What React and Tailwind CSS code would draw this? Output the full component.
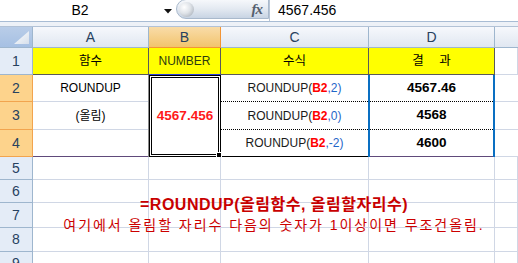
import React from "react";

const F = "font-['Liberation_Sans','Noto_Sans_CJK_KR',sans-serif]";

function RowHead({ n, h, sel }) {
  return (
    <div
      className={
        "w-[33px] shrink-0 flex items-center justify-center text-[14px] text-[#27415f] border-r border-b " +
        h +
        (sel ? " bg-[#fdd38c] border-[#f2a44e]" : " bg-[#e4ecf7] border-[#9eb6ce]")
      }
    >
      {n}
    </div>
  );
}

function Grid({ w }) {
  return <div className={"shrink-0 h-full border-r border-b border-[#d0d7e5] " + w} />;
}

function Formula({ arg }) {
  return (
    <span>
      <span className="text-[#1a1a1a]">ROUNDUP(</span>
      <span className="text-[#ff0000] font-bold">B2</span>
      <span className="text-[#1f66c8]">,{arg})</span>
    </span>
  );
}

export default function App() {
  return (
    <div className={"w-[518px] h-[263px] overflow-hidden bg-white relative " + F}>
      {/* formula bar */}
      <div className="flex h-[22px] border-b border-[#a8bcd4] bg-white">
        <div className="w-[160px] shrink-0 flex items-center justify-center text-[14px] text-black">B2</div>
        <div className="w-[16px] shrink-0 flex items-center">
          <svg width="8" height="5" viewBox="0 0 8 5" className="ml-[4px] mt-[2px]">
            <polygon points="0,0 8,0 4,4.5" fill="#111" />
          </svg>
        </div>
        <div className="w-[93px] shrink-0 h-[20px] -mt-[1px] rounded-l-[10px] border border-[#a9b9cc] bg-gradient-to-b from-[#f6f8fb] via-[#e3e9f1] to-[#c8d4e3] flex items-center justify-between pl-[2px] pr-[6px]">
          <div className="w-[15px] h-[15px] rounded-full bg-[radial-gradient(circle_at_35%_35%,#ffffff_0%,#dfe3e8_45%,#9aa3ae_100%)]" />
          <span className="font-['Liberation_Serif',serif] italic font-bold text-[15px] text-[#55606e] tracking-[-1px]">fx</span>
        </div>
        <div className="flex-1 border-l border-[#b8c5d5] flex items-center pl-[8px] text-[14px] text-black">4567.456</div>
      </div>
      <div className="h-[5px] bg-[#edf1f7] border-b border-[#b2c2d6]" />

      {/* column header */}
      <div className="flex h-[21px] text-[14px] text-[#27415f]">
        <div className="w-[33px] shrink-0 bg-gradient-to-b from-[#b9cde8] to-[#a6c0e3] border-r border-b border-[#9eb6ce] flex items-end justify-end p-[3px]">
          <svg width="15" height="13" viewBox="0 0 15 13">
            <defs>
              <linearGradient id="tri" x1="0" y1="0" x2="1" y2="1">
                <stop offset="0" stopColor="#ffffff" />
                <stop offset="1" stopColor="#d6dfeb" />
              </linearGradient>
            </defs>
            <polygon points="15,0 15,13 0,13" fill="url(#tri)" />
          </svg>
        </div>
        <div className="w-[116px] shrink-0 flex items-center justify-center bg-gradient-to-b from-[#f6f8fc] to-[#e0e7f1] border-r border-b border-[#9eb6ce]">A</div>
        <div className="w-[72px] shrink-0 flex items-center justify-center bg-gradient-to-b from-[#f9dca8] to-[#f2c46c] border-r border-b border-[#f29536]">B</div>
        <div className="w-[148px] shrink-0 flex items-center justify-center bg-gradient-to-b from-[#f6f8fc] to-[#e0e7f1] border-r border-b border-[#9eb6ce]">C</div>
        <div className="w-[126px] shrink-0 flex items-center justify-center bg-gradient-to-b from-[#f6f8fc] to-[#e0e7f1] border-r border-b border-[#9eb6ce]">D</div>
        <div className="flex-1 bg-gradient-to-b from-[#f6f8fc] to-[#e0e7f1] border-b border-[#9eb6ce]" />
      </div>

      {/* row 1 */}
      <div className="flex h-[27px] text-[12px] text-black">
        <RowHead n="1" h="h-[27px]" />
        <div className="w-[116px] shrink-0 bg-[#ffff00] border-r border-b border-[#5a5a5a] flex items-center justify-center text-[12.5px]">함수</div>
        <div className="w-[72px] shrink-0 bg-[#ffff00] border-r border-b border-r-[#5a5a5a] border-b-[#2a3ee0] flex items-center justify-center text-[#2d3a10]">NUMBER</div>
        <div className="w-[148px] shrink-0 bg-[#ffff00] border-r border-b border-[#5a5a5a] flex items-center justify-center text-[12.5px]">수식</div>
        <div className="w-[126px] shrink-0 bg-[#ffff00] border-r border-b border-[#5a5a5a] flex items-center justify-center tracking-[6px] pl-[6px] text-[12.5px]">결 과</div>
        <Grid w="flex-1" />
      </div>

      {/* rows 2-4 */}
      <div className="flex h-[82px] text-[12px] text-black">
        <div className="w-[33px] shrink-0 flex flex-col">
          <RowHead n="2" h="h-[27px]" sel />
          <RowHead n="3" h="h-[28px]" sel />
          <RowHead n="4" h="h-[27px]" sel />
        </div>
        <div className="w-[116px] shrink-0 flex flex-col border-r border-[#8a8a8a]">
          <div className="h-[27px] border-b border-[#d0d7e5] flex items-center justify-center">ROUNDUP</div>
          <div className="h-[28px] border-b border-[#d0d7e5] flex items-center justify-center">(올림)</div>
          <div className="h-[27px] border-b border-[#604a7b]" />
        </div>
        <div className="w-[72px] shrink-0 relative border-[3px] border-double border-black flex items-center justify-center text-[13.5px] font-bold text-[#ff1a1a]">
          4567.456
          <div className="absolute -right-[4px] -bottom-[4px] w-[6px] h-[6px] bg-black border border-white" />
        </div>
        <div className="w-[147px] shrink-0 flex flex-col">
          <div className="h-[27px] border-b border-dotted border-black flex items-center justify-center"><Formula arg="2" /></div>
          <div className="h-[28px] border-b border-dotted border-black flex items-center justify-center"><Formula arg="0" /></div>
          <div className="h-[27px] border-b border-black flex items-center justify-center"><Formula arg="-2" /></div>
        </div>
        <div className="w-[127px] shrink-0 flex flex-col border-l-2 border-r-2 border-[#0a6fc2] font-bold text-[13.5px]">
          <div className="h-[27px] border-b border-dotted border-black flex items-center justify-center">4567.46</div>
          <div className="h-[28px] border-b border-dotted border-black flex items-center justify-center">4568</div>
          <div className="h-[27px] border-b border-[#604a7b] flex items-center justify-center">4600</div>
        </div>
        <div className="flex-1 flex flex-col">
          <div className="h-[27px] border-b border-[#d0d7e5]" />
          <div className="h-[28px] border-b border-[#d0d7e5]" />
          <div className="h-[27px] border-b border-[#d0d7e5]" />
        </div>
      </div>

      {/* rows 5-9 */}
      <div className="relative">
        {[
          ["5", "h-[23px]"],
          ["6", "h-[23px]"],
          ["7", "h-[25px]"],
          ["8", "h-[24px]"],
          ["9", "h-[24px]"],
        ].map(([n, h]) => (
          <div key={n} className={"flex " + h}>
            <RowHead n={n} h={h} />
            <Grid w="w-[116px]" />
            <Grid w="w-[72px]" />
            <Grid w="w-[148px]" />
            <Grid w="w-[126px]" />
            <Grid w="flex-1" />
          </div>
        ))}
        <div className="absolute left-[33px] top-0 w-[482px] flex flex-col items-center pt-[38px]">
          <div className="leading-[20px] text-[16px] font-bold text-[#c80000] whitespace-nowrap tracking-[0.5px]">
            =ROUNDUP(올림함수, 올림할자리수)
          </div>
          <div className="mt-[1px] leading-[18px] text-[14px] text-[#cc0000] tracking-[1.95px] whitespace-nowrap">
            여기에서 올림할 자리수 다음의 숫자가 1이상이면 무조건올림.
          </div>
        </div>
      </div>
    </div>
  );
}
